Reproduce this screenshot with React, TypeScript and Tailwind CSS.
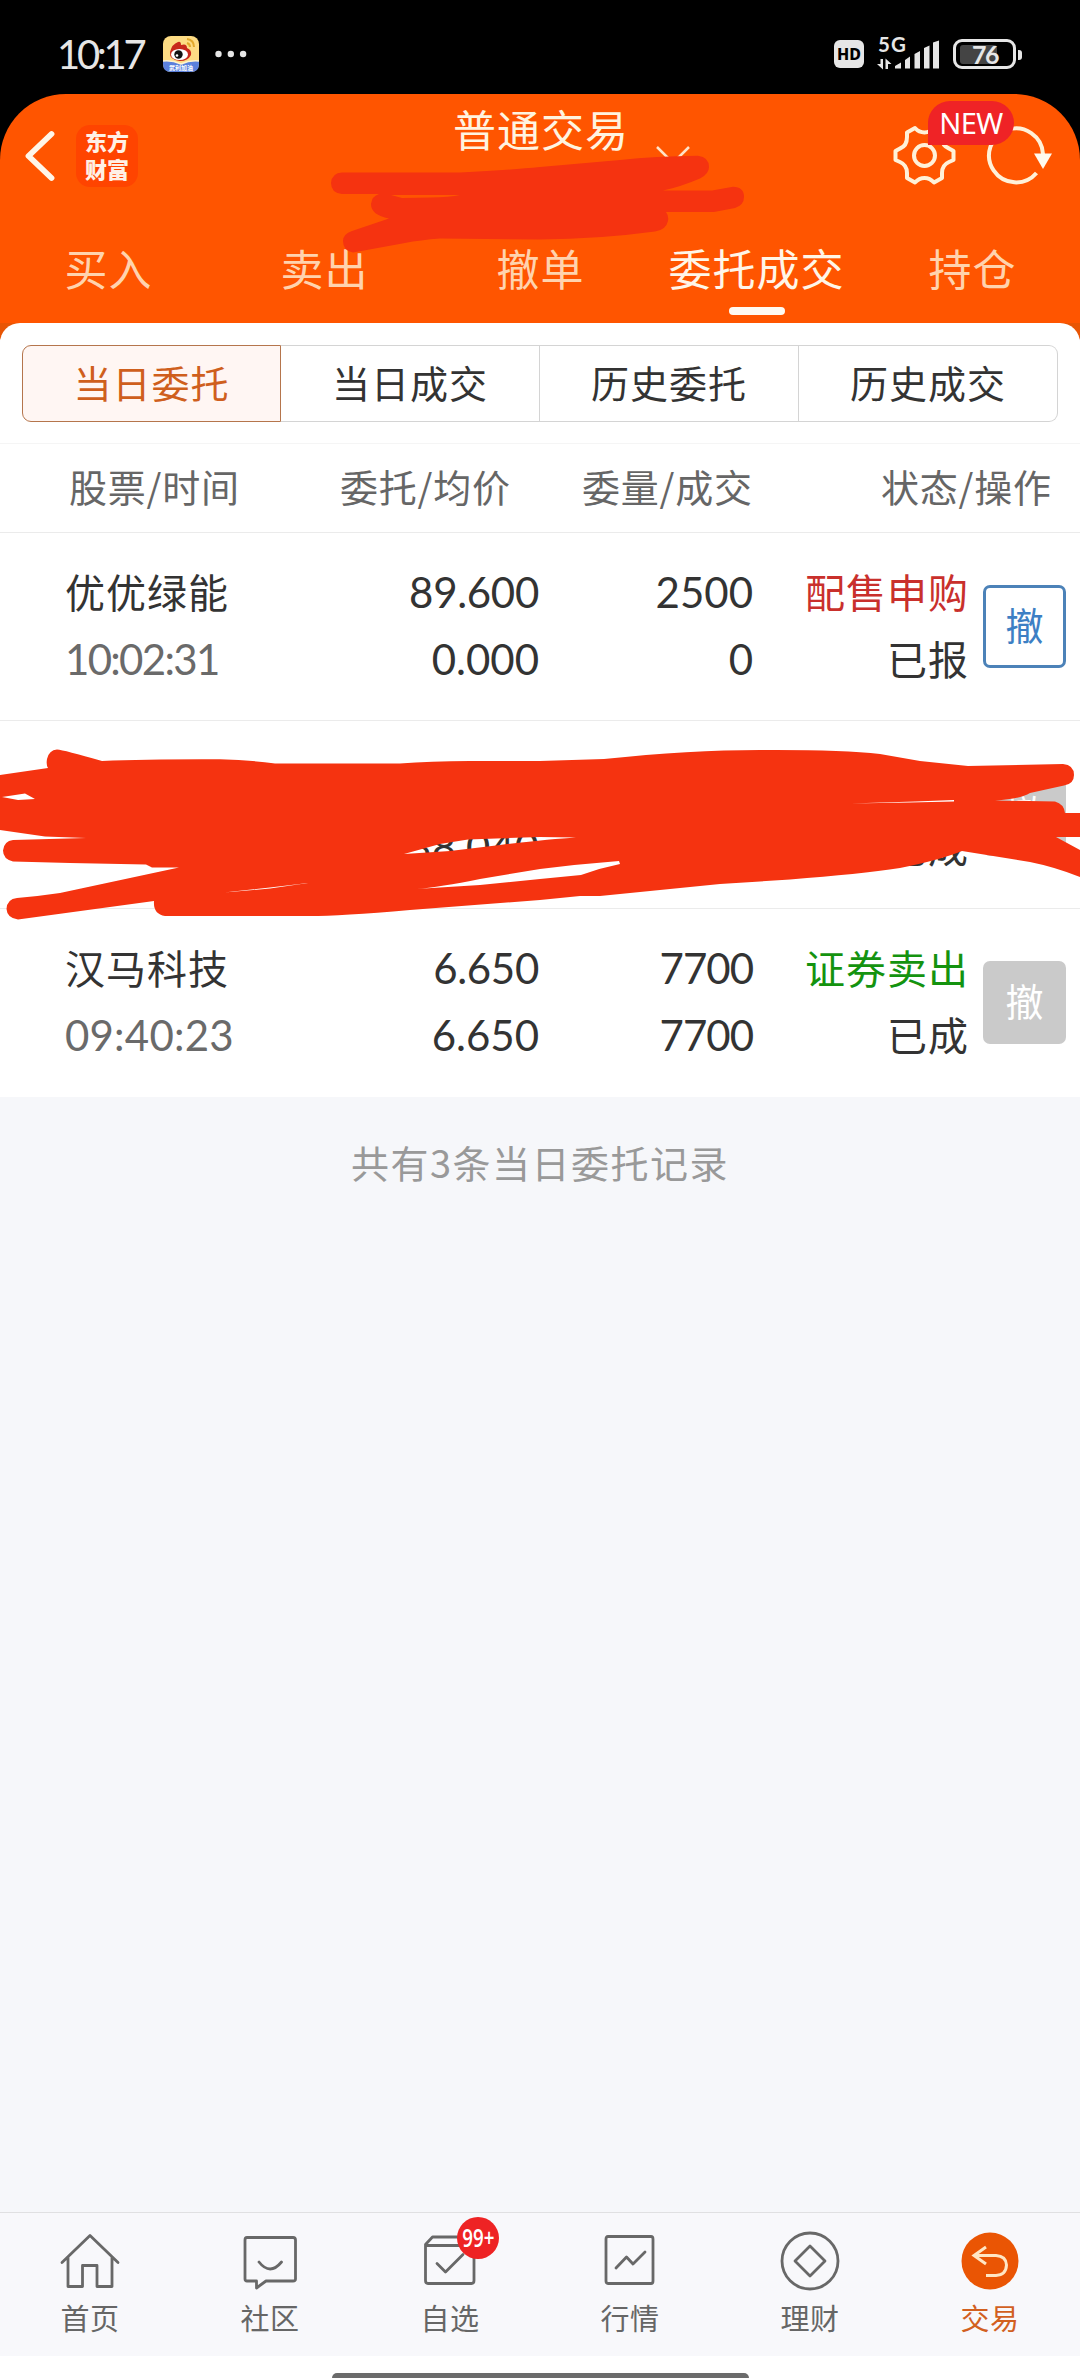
import React from 'react';

const cjk = "font-['Noto_Sans_CJK_SC',sans-serif]";
const num = "font-['Lato','Noto_Sans_CJK_SC',sans-serif]";

function StatusBar() {
  return (
    <div className="flex h-[94px] items-start bg-black text-[#e6e6e6]">
      <div className="ml-[57px] mt-[29px] w-[106px] font-['Lato',sans-serif] text-[40px] leading-[50px] tracking-[-3.300px]">10:17</div>
      <svg className="mt-9 h-9 w-9" viewBox="0 0 36 36">
        <rect width="36" height="36" rx="8" fill="#fddc84" />
        <path d="M0 25 Q9 24 18 28 Q27 24 36 25 V28 Q36 36 28 36 H8 Q0 36 0 28Z" fill="#5b80dc" />
        <path d="M0 25 Q9 24 18 28 Q27 24 36 25" fill="none" stroke="#fff3cf" strokeWidth="1.5" />
        <path d="M7 16 Q9 8 15 6 Q18 5 18 9 Q24 7 24 12 Q29 14 28 19 Q25 25 17 25 Q6 24 7 16Z" fill="#c8271c" />
        <ellipse cx="16.5" cy="18.500" rx="8.500" ry="5.500" fill="#fff" />
        <circle cx="15.500" cy="18.500" r="4.200" fill="#111" />
        <circle cx="14" cy="19.500" r="1.300" fill="#fff" />
        <path d="M24 7 Q27 8 27 11 M24 3 Q31 4 31 11" fill="none" stroke="#e2a92c" strokeWidth="2" />
        <text x="18" y="34" fontSize="6" fontWeight="700" fill="#fff" textAnchor="middle" fontFamily="Noto Sans CJK SC">武利加油</text>
      </svg>
      <svg className="ml-4 mt-[50px] h-2 w-8" viewBox="0 0 32 8" fill="#e6e6e6">
        <circle cx="3.500" cy="4" r="3.200" /><circle cx="15.800" cy="4" r="3.200" /><circle cx="28.100" cy="4" r="3.200" />
      </svg>
      <div className="ml-auto mt-10 flex h-7 w-[30px] items-center justify-center rounded-[6px] bg-[#e6e6e6] font-['Noto_Sans',sans-serif] text-[16px] font-extrabold text-black">HD</div>
      <svg className="ml-3 mt-9 h-9 w-16 overflow-visible" viewBox="0 0 64 36" fill="#e6e6e6">
        <text x="2" y="16" fontSize="20.500" fontWeight="700" fontFamily="Lato" textLength="28">5G</text>
        <path d="M4.500 23 H7 V33.500 L1 28 H4.500Z M9.500 33 V22.500 L15.500 28 H12 V33Z" />
        <path d="M19 32.500 V30 L25 26.500 V32.500Z M29 32.500 V24 L34 20.500 V32.500Z M38.500 32.500 V18 L44 15 V32.500Z M48 32.500 V12 L53.500 9.500 V32.500Z M57 32.500 V6.500 L63 4.500 V32.500Z" />
      </svg>
      <div className="ml-[13px] mt-[39px] flex h-[30px] w-[63px] items-center rounded-[9px] border-[3px] border-[#e6e6e6] p-1">
        <div className="relative h-[19px] w-[37px] rounded-[3px] bg-[#444]">
          <span className="absolute -top-[3px] left-[12px] font-['Lato',sans-serif] text-[25px] font-bold leading-[25px] tracking-[-1.500px]">76</span>
        </div>
      </div>
      <div className="ml-[2px] mr-[58px] mt-[50px] h-[10px] w-1 rounded-r-[3px] bg-[#e6e6e6]" />
    </div>
  );
}

const tabs = ['买入', '卖出', '撤单', '委托成交', '持仓'];

function Header() {
  return (
    <div className="bg-black">
      <header className="relative h-[229px] rounded-t-[66px] bg-[#ff5500]">
        <div className="flex h-[128px]">
          <svg className="ml-6 mt-9 h-[52px] w-8" viewBox="0 0 32 52" fill="none" stroke="#fff6e8" strokeWidth="5.800" strokeLinecap="round" strokeLinejoin="round">
            <path d="M27.500 4 L4.500 26 L27.500 48" />
          </svg>
          <div className="ml-5 mt-[31px] h-[62px] w-[62px] rounded-[14px] bg-[#ff4400] pt-[2px] text-center font-['Noto_Sans_CJK_SC',sans-serif] text-[22px] font-black leading-[27.500px] text-[#fff1e6]">
            东方<br />财富
          </div>
          <div className={`ml-[315px] mt-[4px] w-[178px] text-[43px] leading-[60px] tracking-[1px] text-[#fff4e0] ${cjk}`}>普通交易</div>
          <svg className="mt-[51px] ml-[24px] h-5 w-9" viewBox="0 0 36 20" fill="none" stroke="#ffe3c8" strokeWidth="2.500"><path d="M2 2 L18 18 L34 2" /></svg>
          <div className="relative ml-[201px] mt-[29px] flex">
            <svg className="h-16 w-16" viewBox="892 123 64 64" fill="none" stroke="#fff1d8" strokeWidth="4">
              <path strokeLinejoin="round" d="M915 128 Q919 132.500 924.500 132.500 Q930 132.500 934 128 L942 132.500 V137 Q942 146 949 148.500 L953.500 151 V160 L949 162 Q942 165 942 173 V178 L934 182.500 Q930 178 924.500 178 Q919 178 915 182.500 L907 178 V173 Q907 165 900 162 L895.500 160 V151 L900 148.500 Q907 146 907 137 V132.500Z" />
              <circle cx="924.500" cy="155.500" r="10.500" />
            </svg>
            <svg className="ml-[26px] h-16 w-[72px]" viewBox="982 123 72 64" fill="none" stroke="#fff1d8" strokeWidth="4">
              <path d="M1036.500 173 A27 27 0 1 1 1043 154" />
              <path d="M1034 153.500 H1052 L1043 169Z" fill="#fffaf0" stroke="none" />
            </svg>
            <div className="absolute -top-[22px] left-9 flex h-11 w-[86px] items-center justify-center rounded-[22px] rounded-bl-none bg-[#ef2326] font-['Noto_Sans',sans-serif] text-[29px] tracking-[-0.500px] text-white">NEW</div>
          </div>
        </div>
        <nav className={`grid grid-cols-5 text-center text-[43px] leading-[60px] tracking-[1px] ${cjk}`}>
          {tabs.map((t) => (
            <div key={t} className={t === '委托成交' ? 'flex flex-col items-center pl-px pt-[15px] text-[#fff6e8]' : 'pl-px pt-[15px] text-[#ffd3ae]'}>
              <span>{t}</span>
              {t === '委托成交' && <i className="mt-[10px] h-2 w-14 rounded-full bg-[#fffaf2]" />}
            </div>
          ))}
        </nav>
        <svg className="pointer-events-none absolute left-0 top-0" width="1080" height="229" viewBox="0 94 1080 229">
          <path fill="#f53310" d="M342 172.600 H460 Q510 170 540 167 L620 160 Q655 156 698 155.700 Q709 157 709 167 Q709 174 700 178.500 Q680 187 663 190.500 H712 L733 186.800 Q744 187 744 197 Q744 205 735 208 L714 212 H666 Q669 216 668 221 Q666 230 655 231.500 Q600 239 540 239.500 L440 238.500 Q420 240 405 243 L353 252.500 Q343 251 343 241 Q343 234 352 231 L389 218.500 Q371 215 371 204 Q372 196 379 194 H342 Q331 193 331 183 Q332 173 342 172.600Z" />
          <path fill="#ff5500" d="M391 195 H460 Q450 197 430 197.500 L402 198Z" />
        </svg>
      </header>
    </div>
  );
}

const segments = ['当日委托', '当日成交', '历史委托', '历史成交'];

function Segments() {
  return (
    <div className={`mx-[22px] grid h-[77px] grid-cols-4 text-center text-[38px] leading-[71px] tracking-[1px] text-[#333] ${cjk}`}>
      {segments.map((s, i) => (
        <div
          key={s}
          className={
            i === 0
              ? 'rounded-l-[9px] border border-[#b5754c] bg-[#fff6f3] text-[#cf5f1d]'
              : i === 3
                ? 'rounded-r-[9px] border border-l-0 border-[#d4d4d4]'
                : 'border border-l-0 border-[#d4d4d4]'
          }
        >
          {s}
        </div>
      ))}
    </div>
  );
}

type Order = { name: string; time: string; price: string; avg: string; qty: string; done: string; side: string; state: string; tone: string; active?: boolean };

const orders: Order[] = [
  { name: '优优绿能', time: '10:02:31', price: '89.600', avg: '0.000', qty: '2500', done: '0', side: '配售申购', state: '已报', tone: 'text-[#c9302c]', active: true },
  { name: '', time: '', price: '', avg: '38.040', qty: '', done: '', side: '', state: '已成', tone: 'text-[#c9302c]' },
  { name: '汉马科技', time: '09:40:23', price: '6.650', avg: '6.650', qty: '7700', done: '7700', side: '证券卖出', state: '已成', tone: 'text-[#14930f]' },
];

function OrderRow({ o, last }: { o: Order; last: boolean }) {
  return (
    <div className={`flex h-[188px] pl-[65px] pt-[26px] text-[42px] leading-[67px] text-[#333] ${num} ${last ? '' : 'border-b border-[#ebebeb]'}`}>
      <div className="w-[235px]">
        <div className={`-mt-px h-[68px] text-[40px] tracking-[1px] ${cjk}`}>{o.name}</div>
        <div className={`h-[67px] text-[#6a6a6a] ${o.active ? 'tracking-[-1.700px]' : 'tracking-[0.200px]'}`}>{o.time}</div>
      </div>
      <div className="w-[239px] text-right">
        <div className="h-[67px] tracking-[-0.300px]">{o.price}</div>
        <div className="h-[67px]">{o.avg}</div>
      </div>
      <div className={`w-[214px] text-right ${o.active ? '' : 'tracking-[-1px]'}`}>
        <div className="h-[67px]">{o.qty}</div>
        <div className="h-[67px]">{o.done}</div>
      </div>
      <div className={`-mt-px w-[216px] text-right text-[40px] tracking-[1px] ${cjk}`}>
        <div className={`h-[67px] ${o.tone}`}>{o.side}</div>
        <div className="h-[67px]">{o.state}</div>
      </div>
      <button
        className={`ml-[14px] mt-[26px] h-[83px] w-[83px] rounded-[7px] text-[38px] ${cjk} ${o.active ? 'border-[3px] border-[#4c82b8] bg-white pb-[5px] leading-[70px] text-[#3d7fc4]' : 'bg-[#cacaca] pb-[5px] leading-[76px] text-white'}`}
      >
        撤
      </button>
    </div>
  );
}

function Redaction() {
  return (
    <svg className="pointer-events-none absolute left-0 top-0" width="1080" height="188" viewBox="0 721 1080 188" overflow="visible">
      <path
        fill="#f53310"
        fillRule="evenodd"
        d="M57 749.500 Q64 750 102 761 Q150 759 220 759.300 Q250 760 275 763.500 H400 Q430 761 470 761 L540 761 L604 759 Q690 750 760 750 Q840 749.500 880 754 L920 761 L968 766 L1063 764 Q1074 765 1074 775 Q1074 784 1064 785.500 L1030 793 Q1020 799 995 800.500 L1055 801.500 Q1064 804 1065 813 H1080 V837 H1056 L1080 850 V877 Q1055 867 1030 862 L962 851 Q940 860 900 868 Q860 874 790 879.500 L720 884 L600 896 H580 L540 900 L410 910 Q340 916 310 916 H165 Q153 914 154 901 L18 919.500 Q7 918 6.500 909 Q7 899 17 898 Q40 896 60 893 L179 867.500 H152 L146 864.500 L70 863 L13 861.500 Q3 859 3 850.500 Q4 841 13 840 L86 838 L45 836.500 L0 830 V775 L48 768 Q46 765 47 759 Q49 750 57 749.500Z
        M2 797 L25 793.500 L35 799 L18 800Z
        M404 854 L440 844 L468 839.500 L540 837 L576 837.500 Q550 839 500 845 L450 851Z
        M416 889 Q440 887 480 879 L540 869 Q580 864 619 861 L620 864 Q600 868 581 875 L540 879 L480 885Z
        M224 892.500 L270 887.500 L308 883 L270 888.500Z
        M850 803.500 L915 801.500 L954 800 V801.500 L910 802.500Z"
      />
    </svg>
  );
}

const line = { fill: 'none', stroke: '#686868', strokeWidth: 2.8, strokeLinejoin: 'round' as const, strokeLinecap: 'round' as const };

const navItems: { label: string; icon: React.ReactNode }[] = [
  { label: '首页', icon: <path d="M2 28.500 L30 1.500 L58 28.500 M8 23 V52.500 H22.500 V31.500 H37 V52.500 H52 V23" /> },
  { label: '社区', icon: <path d="M7 3.500 H53 Q55.500 3.500 55.500 6 V45 Q55.500 47 53 47 H26 L16.500 54 V47 H7 Q5 47 5 45 V6 Q5 3.500 7 3.500Z M19 28 Q30 42 41.500 28" /> },
  { label: '自选', icon: <path d="M5.500 11.500 H54 V46.500 Q54 49.500 51.500 49.500 H8 Q5.500 49.500 5.500 46.500 V10.500 L12.500 3 H47 L54 11 M17 29.500 L25.500 38 L43 20.500" /> },
  { label: '行情', icon: <path d="M8 2.500 H51 Q53 2.500 53 5 V47 Q53 49.500 51 49.500 H8 Q6 49.500 6 47 V5 Q6 2.500 8 2.500Z M16 34 L26.500 23 L33 30 L45 18" /> },
  { label: '理财', icon: <><circle cx="30" cy="27" r="28" /><path d="M30 12 L45 27 L30 42 L15 27Z" /></> },
  { label: '交易', icon: <><circle cx="30" cy="27" r="28.500" fill="#ea5504" stroke="none" /><path stroke="#ffe6c4" strokeWidth="3" strokeLinecap="butt" strokeLinejoin="miter" d="M26 13 L14 21.500 L26 30 M14 21.500 H36 Q46 22 46.500 31 Q46 41 36 41.500 H26" /></> },
];

function BottomNav() {
  return (
    <footer>
      <div className={`grid h-[144px] grid-cols-6 border-t border-[#e0e0e2] bg-[#f8f8fb] text-center text-[29px] leading-[40px] text-[#666] ${cjk}`}>
        {navItems.map((n) => (
          <div key={n.label} className={`relative flex flex-col items-center pt-[21px] ${n.label === '交易' ? 'text-[#d2601f]' : ''}`}>
            <svg className="h-[58px] w-[60px] overflow-visible" viewBox="0 0 60 58" {...line}>{n.icon}</svg>
            <span className="mt-[5px] tracking-[0.500px]">{n.label}</span>
            {n.label === '自选' && (
              <b className="absolute left-[97px] top-[4px] flex h-[42px] w-[42px] items-center justify-center rounded-full bg-[#ee2324] font-['Open_Sans',sans-serif] text-[26px] font-semibold text-white">
                <span className="-mt-[3px] scale-x-[0.72]">99+</span>
              </b>
            )}
          </div>
        ))}
      </div>
      <div className="flex h-[22px] items-end justify-center bg-white">
        <div className="h-[5px] w-[417px] rounded-t-[5px] bg-[#6b6b6b]" />
      </div>
    </footer>
  );
}

export default function App() {
  return (
    <div className="flex h-[2378px] w-[1080px] flex-col overflow-hidden bg-[#f6f7fa]">
      <StatusBar />
      <Header />
      <div className="bg-gradient-to-b from-[#e85504] from-[0px] via-[#e85504] via-[16px] to-[#f6f7fa] to-[17px]">
        <main className="rounded-t-[20px] bg-white pt-[22px]">
          <Segments />
          <div className={`mt-[21px] flex h-[90px] border-y border-t-[#f5f5f5] border-b-[#ebebeb] pl-[69px] text-[38px] leading-[84px] tracking-[0.800px] text-[#666] ${cjk}`}>
            <div className="w-[271px]">股票/时间</div>
            <div className="w-[242px]">委托/均价</div>
            <div className="w-[299px]">委量/成交</div>
            <div>状态/操作</div>
          </div>
          {orders.map((o, i) => (
            <div key={i} className="relative">
              <OrderRow o={o} last={i === 2} />
              {i === 1 && <div className="absolute left-0 top-0 z-10"><Redaction /></div>}
            </div>
          ))}
        </main>
      </div>
      <p className={`mt-[37px] text-center text-[38px] leading-[56px] tracking-[1.500px] text-[#999] ${cjk}`}>共有3条当日委托记录</p>
      <div className="flex-1" />
      <BottomNav />
    </div>
  );
}
